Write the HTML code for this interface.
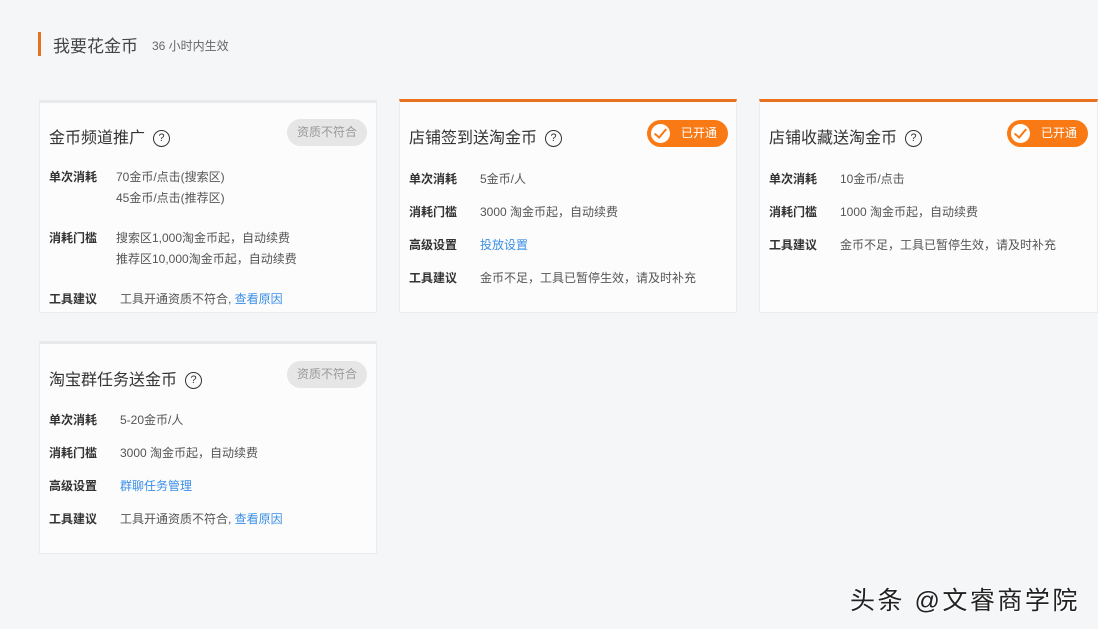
<!DOCTYPE html>
<html><head><meta charset="utf-8"><style>
*{margin:0;padding:0;box-sizing:border-box}
body{width:1098px;height:629px;background:#f4f6f8;position:relative;overflow:hidden;font-family:"Liberation Sans","Noto Sans CJK SC",sans-serif;color:#333}
.a{position:absolute;white-space:nowrap}
.card{position:absolute;background:#fcfcfc;border:1px solid #eaecee;border-top:3px solid #e8e9ea}
.on{border-top:3px solid #e8701f}
.t{font-size:16px;color:#333}
.l{font-size:12px;color:#333;font-weight:bold}
.v{font-size:12px;color:#555}
.lk{color:#3a8ee6}
.q{display:inline-block;width:17px;height:17px;border:1.5px solid #333;border-radius:50%;font-size:11px;line-height:14px;text-align:center;vertical-align:2px;margin-left:8px}
.gb{position:absolute;background:#e6e6e6;color:#999;font-size:12px;border-radius:14px;width:80px;height:27px;line-height:27px;text-align:center}
.ob{position:absolute;background:#f97a14;color:#fff;font-size:12px;border-radius:14px;width:81px;height:27px;line-height:27px;padding-left:34px}
.ob i{position:absolute;left:4px;top:4px;width:19px;height:19px;border-radius:50%;background:#fff}
.ob i:after{content:"";position:absolute;left:6px;top:2px;width:5px;height:10px;border:solid #f97a14;border-width:0 2px 2px 0;transform:rotate(40deg)}
</style></head><body>
<div class="a" style="left:38px;top:32px;width:3px;height:24px;background:#e8701f"></div>
<div class="a" style="left:53px;top:32px;font-size:17px;color:#444">我要花金币</div>
<div class="a" style="left:152px;top:37px;font-size:12px;color:#666">36 小时内生效</div>

<div class="card" style="left:39px;top:100px;width:338px;height:213px"></div>
<div class="a t" style="left:49px;top:124px">金币频道推广<span class="q">?</span></div>
<div class="gb" style="left:287px;top:119px">资质不符合</div>
<div class="a l" style="left:49px;top:168px">单次消耗</div>
<div class="a v" style="left:116px;top:168px">70金币/点击(搜索区)</div>
<div class="a v" style="left:116px;top:189px">45金币/点击(推荐区)</div>
<div class="a l" style="left:49px;top:229px">消耗门槛</div>
<div class="a v" style="left:116px;top:229px">搜索区1,000淘金币起，自动续费</div>
<div class="a v" style="left:116px;top:250px">推荐区10,000淘金币起，自动续费</div>
<div class="a l" style="left:49px;top:290px">工具建议</div>
<div class="a v" style="left:120px;top:290px">工具开通资质不符合, <span class="lk">查看原因</span></div>

<div class="card on" style="left:399px;top:99px;width:338px;height:214px"></div>
<div class="a t" style="left:409px;top:124px">店铺签到送淘金币<span class="q">?</span></div>
<div class="ob" style="left:647px;top:120px"><i></i>已开通</div>
<div class="a l" style="left:409px;top:170px">单次消耗</div>
<div class="a v" style="left:480px;top:170px">5金币/人</div>
<div class="a l" style="left:409px;top:203px">消耗门槛</div>
<div class="a v" style="left:480px;top:203px">3000 淘金币起，自动续费</div>
<div class="a l" style="left:409px;top:236px">高级设置</div>
<div class="a v lk" style="left:480px;top:236px">投放设置</div>
<div class="a l" style="left:409px;top:269px">工具建议</div>
<div class="a v" style="left:480px;top:269px">金币不足，工具已暂停生效，请及时补充</div>

<div class="card on" style="left:759px;top:99px;width:339px;height:214px"></div>
<div class="a t" style="left:769px;top:124px">店铺收藏送淘金币<span class="q">?</span></div>
<div class="ob" style="left:1007px;top:120px"><i></i>已开通</div>
<div class="a l" style="left:769px;top:170px">单次消耗</div>
<div class="a v" style="left:840px;top:170px">10金币/点击</div>
<div class="a l" style="left:769px;top:203px">消耗门槛</div>
<div class="a v" style="left:840px;top:203px">1000 淘金币起，自动续费</div>
<div class="a l" style="left:769px;top:236px">工具建议</div>
<div class="a v" style="left:840px;top:236px">金币不足，工具已暂停生效，请及时补充</div>

<div class="card" style="left:39px;top:341px;width:338px;height:213px"></div>
<div class="a t" style="left:49px;top:366px">淘宝群任务送金币<span class="q">?</span></div>
<div class="gb" style="left:287px;top:361px">资质不符合</div>
<div class="a l" style="left:49px;top:411px">单次消耗</div>
<div class="a v" style="left:120px;top:411px">5-20金币/人</div>
<div class="a l" style="left:49px;top:444px">消耗门槛</div>
<div class="a v" style="left:120px;top:444px">3000 淘金币起，自动续费</div>
<div class="a l" style="left:49px;top:477px">高级设置</div>
<div class="a v lk" style="left:120px;top:477px">群聊任务管理</div>
<div class="a l" style="left:49px;top:510px">工具建议</div>
<div class="a v" style="left:120px;top:510px">工具开通资质不符合, <span class="lk">查看原因</span></div>

<div class="a" style="left:850px;top:581px;font-size:25px;letter-spacing:2.5px;color:#222;text-shadow:1px 1px 0 #fff,-1px -1px 0 #fff">头条 @文睿商学院</div>
</body></html>
